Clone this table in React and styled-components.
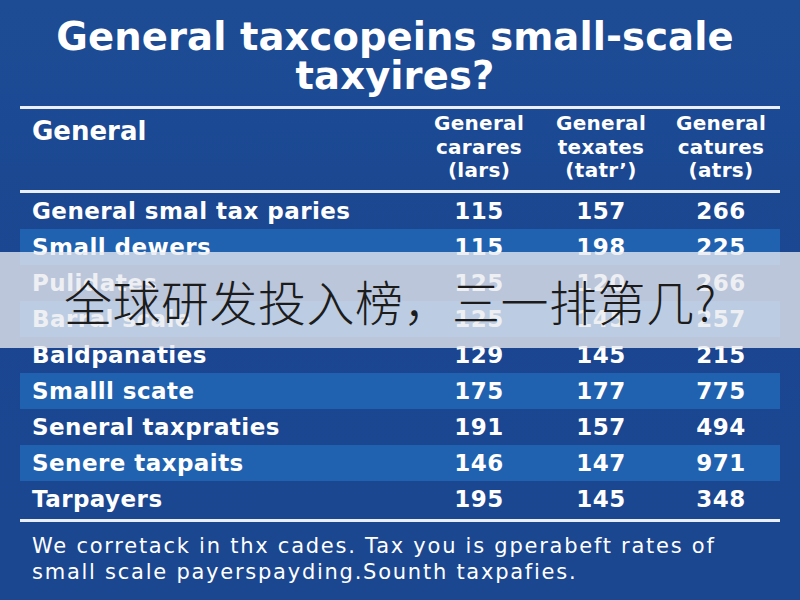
import React from 'react';
import styled, { createGlobalStyle } from 'styled-components';

const rows = [
	{ label: 'General smal tax paries', values: ['115', '157', '266'] },
	{ label: 'Small dewers', values: ['115', '198', '225'] },
	{ label: 'Pulidates', values: ['125', '120', '266'] },
	{ label: 'Barral scale', values: ['125', '145', '257'] },
	{ label: 'Baldpanaties', values: ['129', '145', '215'] },
	{ label: 'Smalll scate', values: ['175', '177', '775'] },
	{ label: 'Seneral taxpraties', values: ['191', '157', '494'] },
	{ label: 'Senere taxpaits', values: ['146', '147', '971'] },
	{ label: 'Tarpayers', values: ['195', '145', '348'] },
];

const columns = [
	['General', 'carares', '(lars)'],
	['General', 'texates', '(tatr\u2019)'],
	['General', 'catures', '(atrs)'],
];

const GlobalStyle = createGlobalStyle`
	html, body {
		margin: 0;
		padding: 0;
		width: 800px;
		height: 600px;
		overflow: hidden;
		background: #1b4790;
	}
	* { box-sizing: border-box; }
`;

const Page = styled.div`
	position: relative;
	width: 800px;
	height: 600px;
	background: linear-gradient(180deg, #1d4c95 0%, #1b4590 50%, #1b4791 100%);
	color: #fff;
	font-family: 'DejaVu Sans', 'Open Sans', sans-serif;
	padding: 17px 20px 0;
	display: flex;
	flex-direction: column;
`;

const Title = styled.h1`
	margin: 0;
	font-size: 38.5px;
	line-height: 39px;
	font-weight: 700;
	text-align: center;
	padding-right: 10px;
	letter-spacing: 0.1px;
`;

const Rule = styled.div`
	height: 3px;
	background: #e9eef7;
	margin-top: ${(p) => p.top || 0}px;
`;

const Grid = styled.div`
	display: grid;
	grid-template-columns: 1fr 122px 122px 118px;
	padding-left: 12px;
`;

const HeaderRow = styled(Grid)`
	height: 81px;
`;

const HeadLabel = styled.div`
	margin-top: 7px;
	font-size: 26px;
	font-weight: 700;
	line-height: 30px;
`;

const HeadCol = styled.div`
	padding-top: 3px;
	font-size: 20px;
	font-weight: 700;
	line-height: 23.5px;
	text-align: center;
	letter-spacing: 0.3px;
`;

const Row = styled(Grid)`
	align-items: center;
	height: 36px;
	background: ${(p) => (p.shade ? '#2062b0' : 'transparent')};
	font-size: 23px;
	font-weight: 700;
	letter-spacing: 0.45px;
`;

const Cell = styled.div`
	text-align: center;
`;

const Footer = styled.p`
	margin: 0;
	padding: 11px 0 0 12px;
	font-size: 21px;
	line-height: 26px;
	font-weight: 400;
	letter-spacing: 1.75px;
	white-space: nowrap;
`;

const Banner = styled.div`
	position: absolute;
	left: 0;
	right: 0;
	top: 252px;
	height: 96px;
	background: rgba(232, 235, 240, 0.78);
	display: flex;
	align-items: center;
	padding-left: 64px;
	font-family: 'Noto Sans CJK SC', 'Noto Sans', sans-serif;
	font-size: 48px;
	font-weight: 300;
	color: #1c1c1c;
	letter-spacing: 0.5px;
`;

export default function App() {
	return (
		<Page>
			<GlobalStyle />
			<Title>
				General taxcopeins small-scale
				<br />
				taxyires?
			</Title>
			<Rule top={11} />
			<HeaderRow>
				<HeadLabel>General</HeadLabel>
				{columns.map((c, i) => (
					<HeadCol key={i}>
						{c.map((l) => (
							<div key={l}>{l}</div>
						))}
					</HeadCol>
				))}
			</HeaderRow>
			<Rule />
			{rows.map((r, i) => (
				<Row key={r.label} shade={i % 2 === 1}>
					<div>{r.label}</div>
					{r.values.map((v, j) => (
						<Cell key={j}>{v}</Cell>
					))}
				</Row>
			))}
			<Rule top={2} />
			<Footer>
				We corretack in thx cades. Tax you is gperabeft rates of
				<br />
				small scale payerspayding.Sounth taxpafies.
			</Footer>
			<Banner>全球研发投入榜，三一排第几?</Banner>
		</Page>
	);
}
